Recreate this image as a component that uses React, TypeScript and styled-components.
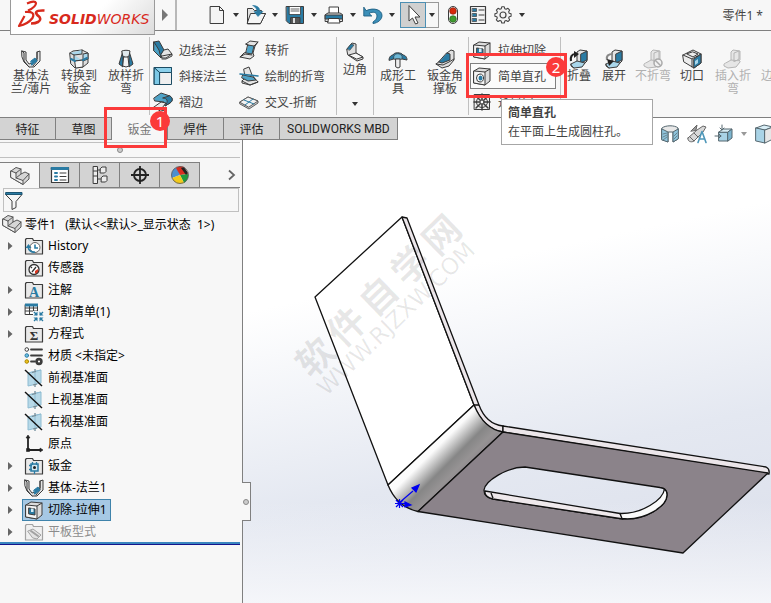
import React from "react";
import styled, { createGlobalStyle, css } from "styled-components";

const font = `"Noto Sans", "Noto Sans CJK SC", sans-serif`;
const c = {
  panel: "#f7f7f7",
  line: "#808080",
  soft: "#c0c0c0",
  tab: "#d3d3d3",
  text: "#444444",
  red: "#fb3a3a",
  ink: "#3c3c3c",
  blue: "#2a7ba3",
  sky: "#a9d6ea",
};

const GlobalStyle = createGlobalStyle`
  *, *::before, *::after { box-sizing: border-box; }
  body { margin: 0; font-family: ${font}; font-size: 12px; color: ${c.text}; }
  button, input { font: inherit; color: inherit; }
  button { padding: 0; border: 0; background: none; cursor: pointer; }
  svg { display: block; flex: none; }
`;

/* ---------- icons ---------- */

const k = { stroke: c.ink, strokeWidth: 1, strokeLinejoin: "round" as const, strokeLinecap: "round" as const };

const part = (
  <g {...k} stroke="#555" fill="#d6d6d6">
    <path d="M1 5l5-3.500 5 1.500v5l4-2 4 2v5l-6 5.500-12-7z" />
    <path fill="#efefef" d="M1 5l5 2v5l7 2.500v4l-12-7z" />
    <path d="M6 7l5-4M6 12l5-4M13 14.500l6-6.500" fill="none" />
  </g>
);
const folder = <path {...k} strokeWidth="1.200" fill="#e9e9e9" d="M1.500 18V3.500l1-1h6l1 2h9V18z" />;
const bent = (
  <>
    <path {...k} fill="#e4e4e4" d="M8 12V3l3-2 7 1v10l-4 4-5-1z" />
    <path {...k} fill={c.blue} d="M12 5l6-3v9l-6 3z" />
    <path {...k} fill={c.sky} d="M2 15l6-3 8 2-3 4-8 1z" />
    <path {...k} fill="none" d="M2 15v2l3 2" />
  </>
);
const plane = (
  <g>
    <path d="M4 5l13-3v13L4 18z" fill="#b7d9e8" stroke="#8ebcd2" />
    <path d="M11 1v18M4 5l13-3" stroke="#8ebcd2" fill="none" />
    <path d="M11 1v3M11 16v3M8 4.500l4-1M9 17l4-1" stroke="#7a8a92" fill="none" />
    <path d="M1 2l17 16" stroke="#111" strokeWidth="1.400" />
  </g>
);
const ghost = (
  <g stroke="#b5b5b5" fill="#e6e6e6" strokeLinejoin="round">
    <path d="M8 11V3l2-2 7 1v9l-5 3z" />
    <path d="M11 4l5-2v8l-5 3zM1 15l7-4 9 1-4 5-8 1z" />
    <path d="M1 15v2l4 2 8-1 4-5v-1" />
  </g>
);
const flange = (
  <g {...k}>
    <path fill="#e4e4e4" d="M1 2l4 1v8l3 4 4-1 4-4V3l3-1v10l-6 6H8l-5-5-2-5z" />
    <path fill="none" d="M1 2l2 2v8l5 6M16 3v9l-4 5" />
    <path fill={c.blue} stroke={c.blue} d="M10 12l4-3 2 3-5 4z" />
  </g>
);
const cube = (
  <g {...k}>
    <path fill="#dcdcdc" d="M2 5l5-3 11 1v12l-5 4-11-2z" />
    <path fill="#f4f4f4" d="M2 5l11 1v13l-11-2z" />
    <path fill="none" d="M13 6l5-3" />
  </g>
);

const ICONS: Record<string, React.ReactNode> = {
  new: <path {...k} fill="#f4f4f4" d="M3.500 1.500h9l4 4v13h-13zM12.500 1.500v4h4" />,
  open: (
    <g {...k}>
      <path fill="#e2e2e2" d="M1.500 18.500V3.500h5l2 2h7v3h4l-5 10z" />
      <path fill="#f5f5f5" d="M5 8.500h14.500l-5 10h-13z" />
      <path fill={c.blue} stroke={c.blue} strokeWidth=".6" d="M7 .5c5 0 7 3 7 6h3l-5 5-4-5h3c0-2-1-4-4-6z" />
    </g>
  ),
  save: (
    <g {...k}>
      <path fill={c.blue} d="M1.500 1.500h17v17H4l-2.500-2.500z" />
      <path fill="#fff" strokeWidth=".8" d="M4.500 1.500h11v8h-11z" />
      <path d="M6 4h8M6 6h8" strokeWidth=".8" />
      <path fill="#555" d="M6 12.500h9v6H6z" />
      <path fill="#ddd" stroke="none" d="M8 13h2v5H8z" />
    </g>
  ),
  print: (
    <g {...k}>
      <path fill="#fff" d="M5.500 2h9v7h-9z" />
      <path fill="#e2e2e2" d="M1.500 9.500L4 8h12l2.500 1.500v7h-17z" />
      <path fill={c.blue} d="M1.500 10h17v4h-17z" />
      <path fill="#fff" d="M5 13.500h10l1 4.500H4z" />
    </g>
  ),
  undo: <path {...k} stroke="#1d5f82" strokeWidth=".9" fill="#3c8fb8" d="M.8 2.500v8.500h8L6 8.500c4-2.500 8-1 8 2.500 0 3-2 4.500-4 6v1.500c5-.5 9-4 9-8 0-5.500-8-8.500-15.500-5z" />,
  cursor: <path {...k} fill="#fff" d="M6 1v15l3.500-3 3 6 2.500-1-3-6h4.500z" />,
  traffic: (
    <g>
      <rect x="5.500" y="1.500" width="9" height="17" rx="4.500" fill="#f3f3f3" stroke={c.ink} />
      <circle cx="10" cy="6" r="3.300" fill="#d8290b" stroke="#7d1a08" strokeWidth=".6" />
      <circle cx="10" cy="14" r="3.300" fill="#3f9c2f" stroke="#1d5a15" strokeWidth=".6" />
    </g>
  ),
  list: (
    <g {...k}>
      <path fill="#f2f2f2" strokeWidth="1.200" d="M2.500 1.500h15v17h-15z" />
      <path fill={c.blue} strokeWidth=".7" d="M4.500 3.500h4v3h-4zM4.500 8.500h4v3h-4zM4.500 13.500h4v3h-4z" />
      <path fill="none" d="M11 5h5M11 10h5M11 15h5" />
    </g>
  ),
  gear: (
    <g fill="#f3f3f3" stroke="#444" strokeWidth="1.200" strokeLinejoin="round">
      <path d="M8.600 2h2.800l.6 2.200 1.500.6 2-1.100 1.900 1.900-1.100 2 .6 1.500 2.100.6v2.700l-2.100.6-.6 1.500 1.100 2-1.900 1.900-2-1.100-1.500.6-.6 2.100H8.600L8 17.900l-1.500-.6-2 1.100-1.900-1.900 1.100-2-.6-1.500L1 12.400V9.700l2.100-.6.6-1.500-1.100-2 1.900-1.900 2 1.100L8 4.200z" transform="translate(1 0) scale(.9)" />
      <circle cx="10" cy="10" r="3" />
    </g>
  ),
  flange,
  convert: (
    <g {...k}>
      <path fill="#dedede" d="M1 4l3-2 9-1 6 3v10l-5 4-8 1-4-4z" />
      <path fill={c.sky} d="M1 4l4 2 8-1V1M5 6v6l9-1V5l5-1v6l-5 2" />
      <path fill="#f6f6f6" d="M6 12l8-1v7l-7 1z" />
      <path stroke={c.blue} fill="none" strokeWidth="2" d="M2 10l4 2M14 11l4-2" />
    </g>
  ),
  loft: (
    <g {...k}>
      <path fill={c.blue} d="M7 2L3 15l4 3V8zM13 2l4 13-4 3V8z" />
      <path fill="#dfe8ec" d="M6 2c2-1 6-1 8 0l-1 5-3 2-3-2z" />
      <path fill="#f3f3f3" d="M8 8h4l1 9-3 1-3-1z" />
    </g>
  ),
  edge: (
    <g {...k}>
      <path fill={c.blue} d="M1 2l5-1 5 9v7l-3 1-7-7z" />
      <path fill="#4aa0c5" d="M1 2l5 8 2 8-7-7z" />
      <path fill="#e4e4e4" d="M11 10l4-1 4 5-6 4-4 0-1-3z" />
      <path fill="none" d="M9 16l10-2v2l-6 3H9" />
    </g>
  ),
  miter: (
    <g {...k} stroke="#1c4c63">
      <path fill="#2f86ae" d="M1.500 1.500h17v5H7v12H1.500z" />
      <path fill="#7cc8e6" d="M1.500 1.500L7 6.500v12H1.500z" />
      <path fill="#8bd0eb" d="M1.500 1.500h17v5H7z" />
      <path fill="#efefef" d="M7 6.500h11.500v12H7z" />
    </g>
  ),
  hem: (
    <g {...k}>
      <path fill="#4fa3c7" d="M1 6l7-5 9 3c3 2 3 5 0 7l-5 3-1-4-9-1z" />
      <path fill={c.blue} d="M10 6c4 0 6 3 2 8l5-3c3-2 3-5 0-7z" />
      <path fill="#e9e9e9" d="M1 15l7-5 5 1-4 5 3 2-4 1z" />
    </g>
  ),
  jog: (
    <g {...k}>
      <path fill="#e4e4e4" d="M7 4l4-3 8 1-3 4-2 7 1 3-4 3-10-2 4-4 3-1 2-6z" />
      <path fill="#4fa3c7" d="M9 5l6 1-2 8-6-1z" />
      <path fill="none" d="M1 17l5-3 7 1M7 4l2 1M15 6l4-4" />
    </g>
  ),
  sketched: (
    <g {...k}>
      <path fill="#e4e4e4" d="M5 3l5-2 3 8 6 7-8 3-8-4 3-3z" />
      <path fill="#4fa3c7" d="M4 9l10 2 3 3-8 1-6-3z" />
      <path stroke={c.blue} strokeWidth="1.600" d="M1 8l18 2" />
      <path fill="none" d="M3 15v2l8 2 8-3" />
    </g>
  ),
  cross: (
    <g {...k} stroke="#5a5a5a">
      <path fill="#d4d4d4" d="M1 10l8-5 10 4v2l-9 6-9-5z" />
      <path fill="#f2f2f2" d="M1 10l8-5 10 4-9 6z" />
      <path stroke={c.blue} d="M5 8l10 4M14 7l-8 6" />
    </g>
  ),
  corner: (
    <g {...k}>
      <path fill="#dedede" d="M2 7l5-6 4 1v9l7 4v2l-6 2-9-6z" />
      <path fill="#f7f7f7" d="M4 13l7-2 7 4-6 2z" />
      <path fill={c.blue} strokeWidth=".6" d="M2 7l4-5 3 1-4 5z" />
    </g>
  ),
  form: (
    <g {...k}>
      <path fill={c.blue} d="M1 11c0-4 3-5 4-5 1-3 8-3 10 0 1 0 4 1 4 5l-5-1H6z" />
      <path fill="#6eb8d6" strokeWidth=".6" d="M6 7c1-3 6-3 8 0v3H6z" />
      <path fill="#eee" d="M8 10h4v8l-2 1-2-1z" />
    </g>
  ),
  gusset: (
    <g {...k}>
      <path fill="#e0e0e0" d="M12 4l4-3 3 1v9l-5 6-7 2-6-4 4-3 7-1z" />
      <path fill={c.blue} d="M12 4l3 1v6l-8 3-3-1z" />
      <path fill="none" d="M1 15l7 1 6-3 5-3" />
    </g>
  ),
  cut: (
    <g>
      {cube}
      <path {...k} fill={c.blue} d="M5 8l6 1v6l-6-1z" />
      <path fill="#d6ebf4" d="M7 8.500h2.500v3.500H7z" />
    </g>
  ),
  hole: (
    <g>
      {cube}
      <ellipse {...k} fill="#fff" cx="8" cy="12" rx="3.500" ry="4" />
      <ellipse fill={c.blue} cx="8.500" cy="12" rx="2" ry="2.600" />
    </g>
  ),
  vent: (
    <g {...k} fill="none">
      <path fill="#eee" d="M2.500 2.500h15v15h-15z" />
      <path d="M10 2v16M2 10h16M4 4l12 12M16 4L4 16" strokeWidth="1.500" />
      <circle cx="10" cy="10" r="5.500" />
      <circle cx="10" cy="10" r="2" fill="#fff" />
    </g>
  ),
  fold: (
    <g>
      {bent}
      <path d="M2 12C1 8 3 5 6 5" stroke="#222" strokeWidth="2.200" fill="none" />
      <path d="M5 2l5 3-5 4z" fill="#222" />
    </g>
  ),
  unfold: (
    <g>
      {bent}
      <path d="M9 5C4 5 2 7 3 11" stroke="#888" strokeWidth="2.200" fill="none" />
      <path d="M3 10l7 2-5 5z" fill="#222" />
    </g>
  ),
  nobend: (
    <g>
      {ghost}
      <circle cx="15" cy="14" r="4" fill="#f2f2f2" stroke="#aaa" strokeWidth="1.500" />
      <path d="M12 11l6 6" stroke="#aaa" strokeWidth="1.500" />
    </g>
  ),
  rip: (
    <g {...k}>
      <path fill="#ececec" d="M1 6l10-5 8 4v9l-7 5-10-6z" />
      <path fill="none" d="M1 6l9 4 9-5M5 5l6 3 5-3-5-2zM10 10v8" />
      <path fill={c.blue} d="M12 10l7-5v9l-7 5z" />
      <path fill={c.sky} stroke="none" d="M13 12l3-2v4l-3 2z" />
    </g>
  ),
  ghost,
  trim: <path stroke="#b5b5b5" fill="#eee" d="M4 5h12v6H4z" />,
  section: (
    <g {...k} stroke="#55676f">
      <path fill="#e8e8e8" d="M2 4c3-3 13-3 16 0v11l-5 3V8H8v10l-6-3z" />
      <path fill="#8fc4dc" d="M2 5l6 3v10l-6-2zM18 5l-5 3v10l5-3z" />
      <path strokeWidth=".7" d="M3 10l4-1M3 13l4-2M3 16l4-3M14 12l3-3M14 15l3-3" />
    </g>
  ),
  view: (
    <g {...k} stroke="#666">
      <path fill="#d8d8d8" d="M1 14l9-8 6-4 3 1-3 5-9 9c-3 2-7 0-6-3z" />
      <path fill="#999" d="M9 6l1-5-6 6z" />
      <path d="M3 13l4 4M7 9l4 4" fill="none" />
      <path d="M11 18.500l4-11 4 11M12.500 15h5" stroke="#4d96b8" strokeWidth="1.600" fill="none" />
    </g>
  ),
  orient: (
    <g {...k} stroke="#55676f">
      <path fill="#a9d3e6" d="M5 8h9v9H5z" />
      <path fill="#d9eef6" d="M5 8l4-3h9l-4 3z" />
      <path fill="#7db5cf" d="M14 8l4-3v9l-4 3z" />
      <path d="M8 1v5M6 4l2 2 2-2M1 12h6M5 10l2 2-2 2" fill="none" />
    </g>
  ),
  display: (
    <g {...k} stroke="#55676f">
      <path fill="#d9eef6" d="M2 4l8-3 9 2-8 3z" />
      <path fill="#a9d3e6" d="M2 4l9 2v13l-9-2z" />
      <path fill="#e6e6e6" d="M11 6l8-3v12l-8 4z" />
    </g>
  ),
  part,
  property: (
    <g {...k}>
      <path fill="#fff" strokeWidth="1.200" d="M1.500 2.500h17v15h-17z" />
      <path fill={c.blue} stroke={c.blue} d="M1.500 2.500h17v2h-17z" />
      <path stroke={c.blue} strokeWidth="2" d="M5 8h2M5 11.500h2M5 15h2" />
      <path d="M10 8h6M10 11.500h6M10 15h6" />
    </g>
  ),
  config: (
    <g {...k} fill="#ededed">
      <path d="M3.500 1.500h4v17h-4zM3.500 6h4M3.500 11h4" />
      <path d="M7.500 5h3M7.500 14h3" />
      <path d="M10.500 3.500l1.500-1.500h4v4.500l-1.500 1.500h-4zM11.500 12.500l1.500-1.500h4v4.500l-1.500 1.500h-4z" />
    </g>
  ),
  target: (
    <g fill="none" stroke="#222" strokeWidth="1.800">
      <circle cx="10" cy="10" r="6" />
      <path d="M10 1v18M1 10h18" />
    </g>
  ),
  ball: (
    <g>
      <circle cx="10" cy="10" r="8.500" fill="#eee" />
      <path d="M10 10L2 13A8.500 8.500 0 0 1 4 4l3-2z" fill="#4b8fd0" />
      <path d="M10 10L6 3c2-2 6-2 8-1l4 7z" fill="#d92d20" />
      <path d="M10 10l8-1c1 4-1 7-4 9z" fill="#1f9a3d" />
      <path d="M10 10l4 8c-5 2-10 0-12-5z" fill="#f2c91c" />
      <path d="M11 3l3-1 4 6-2 2z" fill="#222" />
      <circle cx="10" cy="10" r="8.500" fill="none" stroke="#555" strokeWidth=".8" />
    </g>
  ),
  funnel: (
    <g {...k}>
      <path fill="#f5f5f5" d="M2 4.500h16l-6 7v6l-4 2v-8z" />
      <path fill={c.blue} stroke="#1c5572" d="M2 2.500h16v2H2z" />
    </g>
  ),
  history: (
    <g>
      {folder}
      <circle cx="11" cy="11.500" r="5" fill="#fff" stroke="#666" />
      <path d="M11 8.500v3.500h3M4 11a6 6 0 0 0 7 5" fill="none" stroke={c.blue} strokeWidth="1.600" />
      <path d="M1.500 12l3-4 3 4z" fill={c.blue} />
    </g>
  ),
  sensor: (
    <g>
      {folder}
      <circle cx="10" cy="11.500" r="5" fill="#fff" stroke="#333" strokeWidth="1.300" />
      <path d="M8 14l4-5M7 9l1 1" stroke="#333" strokeWidth="1.300" />
      <path d="M11 13l3-2c1 3-1 4-3 5z" fill="#d9351f" />
    </g>
  ),
  note: (
    <g>
      {folder}
      <text x="10" y="17" textAnchor="middle" fontFamily="Liberation Serif, serif" fontWeight="700" fontSize="14" fill={c.blue}>A</text>
    </g>
  ),
  equation: (
    <g>
      {folder}
      <text x="10" y="16" textAnchor="middle" fontFamily="Liberation Serif, serif" fontWeight="700" fontSize="13" fill="#333">Σ</text>
    </g>
  ),
  cutlist: (
    <g>
      <path {...k} fill="#fff" d="M1.500 2.500h12v10h-12zM1.500 6h12M1.500 9h12M5.500 3v9M9.500 3v9" />
      <path fill={c.blue} d="M1 1.500h13v3H1z" />
      <path fill="#f7f7f7" d="M9 9h11v11H9z" />
      <path fill={c.blue} d="M13.500 9.500v4h-4zM15.500 9.500v4h4zM13.500 19.500v-4h-4zM15.500 19.500v-4h4z" />
      <path d="M10 10l3 3M19 10l-3 3M10 19l3-3M19 19l-3-3" stroke={c.blue} strokeWidth="1.400" />
    </g>
  ),
  material: (
    <g {...k}>
      <circle cx="2.800" cy="3.500" r="1.800" fill="#fff" />
      <circle cx="2.800" cy="9.500" r="1.800" fill="#6cc0e5" stroke={c.blue} />
      <circle cx="2.800" cy="15.500" r="1.800" fill="#f0c31d" stroke="#a88600" />
      <path d="M7 3.500h11M7 9.500h11M7 15.500h4" strokeWidth="1.800" />
      <circle cx="15" cy="15.500" r="2.400" fill="#fff" strokeWidth="2.600" />
    </g>
  ),
  plane,
  origin: (
    <g fill="#222" stroke="#222">
      <path d="M4 3v13h13" fill="none" strokeWidth="1.800" />
      <path d="M4 1l2 3H2zM19 16l-3-2v4zM2.500 14.500h3v3h-3z" strokeWidth=".6" />
    </g>
  ),
  sheet: (
    <g>
      {folder}
      <path d="M7 8h7v7H7z" fill="#d2e8f2" stroke={c.blue} strokeWidth="1.500" />
      <path d="M8.500 6v3M12.500 6v3M10.500 15v3M5 9.500h3M5 13.500h3" stroke={c.blue} strokeWidth="1.300" />
      <circle cx="10.500" cy="11.500" r="1.500" fill="#222" />
    </g>
  ),
  flat: (
    <g opacity=".45">
      {folder}
      <path {...k} fill="#ccc" d="M4 9l5-2 8 6-4 4-4-1z" />
      <path {...k} fill="none" d="M7 9l7 5" strokeWidth="2" />
    </g>
  ),
};

const Icon = ({ name }: { name: string }) => (
  <svg width="20" height="20" viewBox="0 0 20 20" aria-hidden="true">
    {ICONS[name]}
  </svg>
);

const Down = styled.span<{ $pale?: boolean }>`
  border: 3px solid transparent;
  border-top: 4px solid ${(p) => (p.$pale ? "#999" : "#333")};
  border-bottom: 0;
`;

/* ---------- page frame ---------- */

const Page = styled.div`
  min-height: 100vh;
  display: flex;
  flex-direction: column;
  background: #fff;
  overflow-x: clip;
`;

const TitleBar = styled.header`
  height: 31px;
  display: flex;
  align-items: center;
  background: ${c.panel};
  border-bottom: 1px solid ${c.line};
`;

const Brand = styled.div`
  position: relative;
  z-index: 1;
  align-self: flex-start;
  display: flex;
  gap: 3px;
  width: 145px;
  height: 35px;
  margin-left: 10px;
  padding: 0 4px 0 5px;
  border: 1px solid #9a9a9a;
  border-top: 0;
  background: linear-gradient(135deg, #fff 55%, #dcdcdc);
  color: #d8291c;
  font: italic 14px/39px "DejaVu Sans", sans-serif;
`;

const Heavy = styled.b`
  font-weight: 700;
`;

const Flyout = styled.button`
  align-self: stretch;
  width: 22px;
  display: grid;
  place-items: center;
  border-right: 2px solid #b8b8b8;
`;

const QuickBar = styled.div`
  display: flex;
  align-items: center;
  gap: 2px;
  margin-left: 30px;
`;

const Quick = styled.button`
  display: flex;
  align-items: center;
`;

const QuickCaret = styled.span`
  width: 17px;
  display: grid;
  place-items: center;
`;

const SelectTool = styled.div`
  display: flex;
  height: 26px;
  width: 39px;
`;

const SelectMain = styled.button`
  width: 26px;
  display: grid;
  place-items: center;
  border: 1px solid #4d8fb3;
  background: #d0d0d0;
`;

const SelectMore = styled.button`
  width: 13px;
  display: grid;
  place-items: center;
  border: 1px solid #999;
  border-left: 0;
`;

const Extras = styled.div`
  display: flex;
  align-items: center;
  gap: 5px;
  margin-left: 4px;
`;

const DocName = styled.h1`
  margin: 0 8px 0 auto;
  font-size: 12px;
  font-weight: 400;
`;

/* ---------- ribbon ---------- */

const Ribbon = styled.div`
  display: flex;
  height: 86px;
  padding: 6px 0 2px;
  background: ${c.panel};
  overflow-x: clip;
`;

const Group = styled.div<{ $lead?: number }>`
  flex: none;
  display: flex;
  padding-left: ${(p) => p.$lead ?? 0}px;
  border-right: 1px solid ${c.soft};
  &:last-child {
    border-right: 0;
  }
`;

const Tall = styled.button<{ $w: number; $raised?: boolean }>`
  flex: none;
  display: flex;
  flex-direction: column;
  align-items: center;
  width: ${(p) => p.$w}px;
  padding-top: ${(p) => (p.$raised ? 5 : 12)}px;
  line-height: 13px;
  text-align: center;
  &:disabled {
    color: #b0b0b0;
  }
`;

const TallLabel = styled.span<{ $raised?: boolean }>`
  max-width: 44px;
  padding-top: ${(p) => (p.$raised ? 1 : 0)}px;
  margin-bottom: ${(p) => (p.$raised ? 26 : 0)}px;
`;

const SmallGrid = styled.div<{ $cols: string }>`
  display: grid;
  grid-template-columns: ${(p) => p.$cols};
  grid-auto-rows: 26px;
`;

const Small = styled.button<{ $hot?: boolean }>`
  display: flex;
  align-items: center;
  gap: 6px;
  white-space: nowrap;
  ${(p) =>
    p.$hot &&
    css`
      width: 86px;
      height: 26px;
      margin-left: -2px;
      padding-left: 1px;
      border: 1px solid ${c.line};
      background: #fbfbfb;
    `}
`;

const Anchor = styled.div`
  position: relative;
  display: flex;
`;

const Mark = styled.span<{ $w: number; $h: number; $x: number }>`
  position: absolute;
  z-index: 3;
  left: ${(p) => p.$x}px;
  top: -10px;
  width: ${(p) => p.$w}px;
  height: ${(p) => p.$h}px;
  border: 3px solid ${c.red};
  pointer-events: none;
`;

const Badge = styled.span<{ $x: number }>`
  position: absolute;
  z-index: 4;
  left: ${(p) => p.$x}px;
  top: -6px;
  width: 20px;
  height: 20px;
  border-radius: 50%;
  background: ${c.red};
  color: #fff;
  font-size: 15px;
  line-height: 20px;
  text-align: center;
  pointer-events: none;
`;

const Tip = styled.div`
  position: absolute;
  z-index: 2;
  left: 29px;
  top: 36px;
  width: 152px;
  padding: 3px 6px;
  border: 1px solid #a6a6a6;
  background: #fff;
  line-height: 19px;
  white-space: nowrap;
`;

const TipTitle = styled.strong`
  display: block;
`;

/* ---------- command tabs ---------- */

const TabRow = styled.div`
  display: flex;
  height: 23px;
  background: #fff;
`;

const tabLook = css<{ $on?: boolean }>`
  height: 23px;
  border: solid ${c.line};
  border-width: ${(p) => (p.$on ? "0 1px 0 0" : "1px 1px 1px 0")};
  background: ${(p) => (p.$on ? c.panel : c.tab)};
  color: ${(p) => (p.$on ? "#777" : "#222")};
`;

const CommandTab = styled.button<{ $on?: boolean }>`
  min-width: 56px;
  padding: 0 7px;
  white-space: nowrap;
  font-family: Roboto, "Noto Sans CJK SC", sans-serif;
  ${tabLook}
`;

const Hud = styled.div`
  position: relative;
  z-index: 1;
  flex: 1;
  min-width: 0;
  display: flex;
  align-items: center;
  justify-content: flex-end;
  gap: 7px;
  height: 29px;
  padding-top: 3px;
  border-top: 1px solid ${c.line};
  clip-path: inset(0);
`;

const HudButton = styled.button`
  display: flex;
  align-items: center;
  &:last-child {
    margin-right: -3px;
  }
`;

/* ---------- feature panel ---------- */

const Work = styled.div`
  flex: 1;
  display: grid;
  grid-template-columns: 243px 1fr;
`;

const Panel = styled.aside`
  position: relative;
  display: flex;
  flex-direction: column;
  background: ${c.panel};
  border-right: 1px solid ${c.line};
  padding-right: 2px;
`;

const Grip = styled.div`
  height: 16px;
  margin: 2px 0 4px;
  display: grid;
  place-items: center;
  border: solid ${c.soft};
  border-width: 1px 0;
`;

const Dot = styled.span`
  width: 6px;
  height: 6px;
  border: 1px solid #888;
  border-radius: 50%;
  background: #ccc;
`;

const PanelTabs = styled.div`
  display: flex;
  height: 26px;
`;

const PanelTab = styled.button<{ $on?: boolean }>`
  width: 40px;
  display: grid;
  place-items: center;
  border: solid ${c.line};
  border-width: ${(p) => (p.$on ? "1px 1px 0 0" : "1px 1px 1px 0")};
  background: ${(p) => (p.$on ? c.panel : c.tab)};
`;

const MoreTabs = styled.button`
  flex: 1;
  display: flex;
  align-items: center;
  justify-content: flex-end;
  padding-right: 4px;
  border-bottom: 1px solid ${c.line};
`;

const Filter = styled.label`
  display: flex;
  align-items: center;
  height: 24px;
  margin: 0 1px 0 3px;
  border: 1px solid ${c.soft};
`;

const FilterInput = styled.input`
  flex: 1;
  min-width: 0;
  border: 0;
  outline: 0;
  background: transparent;
`;

const Tree = styled.ul`
  margin: 0;
  padding: 0;
  list-style: none;
  color: #000;
  line-height: 22px;
`;

const Root = styled.div`
  display: flex;
  align-items: center;
  gap: 3px;
  height: 23px;
  padding-left: 2px;
  color: #000;
  white-space: pre;
`;

const Row = styled.li`
  display: flex;
  align-items: center;
  height: 22px;
`;

const Twist = styled.button`
  width: 22px;
  height: 22px;
  padding-left: 8px;
  flex: none;
  display: flex;
  align-items: center;
`;

const Node = styled.button<{ $on?: boolean; $dim?: boolean }>`
  display: flex;
  align-items: center;
  gap: 4px;
  height: 22px;
  padding: 0 3px 0 1px;
  border: 1px solid ${(p) => (p.$on ? "#3f83ab" : "transparent")};
  background: ${(p) => (p.$on ? "#a6c8e4" : "transparent")};
  color: ${(p) => (p.$dim ? "#8c8c8c" : "#000")};
  white-space: nowrap;
`;

const Rollback = styled.div`
  height: 3px;
  margin-top: -1px;
  background: #3a86bf;
  border-bottom: 1px solid #14148c;
`;

const Handle = styled.button`
  position: absolute;
  z-index: 1;
  top: 342px;
  left: 100%;
  width: 9px;
  height: 39px;
  display: grid;
  place-items: center;
  border: solid ${c.line};
  border-width: 1px 1px 1px 0;
  background: ${c.panel};
`;

const Canvas = styled.main`
  min-width: 0;
  background:
    linear-gradient(180deg, rgba(247, 248, 251, 0) 78%, rgba(247, 248, 251, 0.9) 100%),
    linear-gradient(168deg, #fff 30%, #e4e8f1 66%, #dadeea 100%);
`;

const Scene = styled.svg`
  width: 100%;
  height: auto;
`;

/* ---------- data ---------- */

const quick = [
  ["new", "新建"],
  ["open", "打开"],
  ["save", "保存"],
  ["print", "打印"],
  ["undo", "撤销"],
];

const flanges = [
  ["edge", "边线法兰"],
  ["jog", "转折"],
  ["miter", "斜接法兰"],
  ["sketched", "绘制的折弯"],
  ["hem", "褶边"],
  ["cross", "交叉-折断"],
];

const bends: [string, string, number, boolean][] = [
  ["fold", "折叠", 36, false],
  ["unfold", "展开", 34, false],
  ["nobend", "不折弯", 44, true],
  ["rip", "切口", 34, false],
  ["ghost", "插入折弯", 48, true],
  ["trim", "边角剪裁", 44, true],
];

const tabs = ["特征", "草图", "钣金", "焊件", "评估", "SOLIDWORKS MBD"];

const panelTabs = [
  ["part", "特征树"],
  ["property", "属性"],
  ["config", "配置"],
  ["target", "尺寸"],
  ["ball", "外观"],
];

const nodes: { icon: string; name: string; open?: boolean; on?: boolean; dim?: boolean }[] = [
  { icon: "history", name: "History", open: true },
  { icon: "sensor", name: "传感器" },
  { icon: "note", name: "注解", open: true },
  { icon: "cutlist", name: "切割清单(1)", open: true },
  { icon: "equation", name: "方程式", open: true },
  { icon: "material", name: "材质 <未指定>" },
  { icon: "plane", name: "前视基准面" },
  { icon: "plane", name: "上视基准面" },
  { icon: "plane", name: "右视基准面" },
  { icon: "origin", name: "原点" },
  { icon: "sheet", name: "钣金", open: true },
  { icon: "flange", name: "基体-法兰1", open: true },
  { icon: "cut", name: "切除-拉伸1", open: true, on: true },
  { icon: "flat", name: "平板型式", open: true, dim: true },
];

const TallButton = ({ icon, label, w, off }: { icon: string; label: string; w: number; off?: boolean }) => (
  <Tall $w={w} disabled={off}>
    <Icon name={icon} />
    <TallLabel>{label}</TallLabel>
  </Tall>
);

const Model = () => (
  <Scene viewBox="243 140 528 463" role="img" aria-label="钣金零件">
    <defs>
      <linearGradient id="bend" gradientUnits="userSpaceOnUse" x1="424" y1="438" x2="464" y2="478">
        <stop offset="0" stopColor="#fff" />
        <stop offset=".28" stopColor="#fbfbfb" />
        <stop offset=".62" stopColor="#868686" />
        <stop offset=".8" stopColor="#969394" />
        <stop offset="1" stopColor="#8b838a" />
      </linearGradient>
    </defs>
    <g stroke="#111" strokeWidth="1.300" strokeLinejoin="round">
      <path fill="#fff" d="M402 217L315 297L388 485L474 405z" />
      <path fill="#ece6ea" d="M402 217L407 218L479 405Q486 424 503 426L503 432Q483 429 474 405z" />
      <path fill="url(#bend)" d="M388 485L474 405Q484 429 503 432L418 511.500Q397 507 388 485z" />
      <path fill="none" d="M474 405H479M503 426Q505 430 502 432" />
      <path fill="#ece6ea" d="M503 426L766 467Q770 469 769 474L503 432z" />
      <path
        fill="#8b838a"
        fillRule="evenodd"
        d="M503 432L768 473L683 553L418 511.500z
           M525 467C507 467 485 481 484 490C484 496 488 498 493 499L620 518.500C645 521 667 506 667 495C667 490 664 488 660 487.500z"
      />
      <path fill="#efe9ec" d="M485 491L620 513.500L623 519L493 499Q484 497 485 491z" />
      <path fill="#fafafa" d="M620 513.500C642 514 663 500 664.500 489C667 491 667 493 667 495C667 506 645 521 622 518.500z" />
      <path fill="none" d="M491 493L493 498" />
    </g>
    <g stroke="#0000f0" fill="#0000f0" strokeWidth="1.200">
      <path d="M399 503L413 491M396 500l7 7M403 500l-7 7M395 503.500h10M399.500 499v9" fill="none" />
      <path d="M419 485l-3 7-4-4zM411 505l-6-3v5z" />
    </g>
    <g fill="#000" fillOpacity=".09" transform="rotate(-44 313 357)">
      <text x="296 340 384 428 472" y="372" fontSize="37" fontWeight="700" fontFamily="Noto Sans CJK SC, sans-serif">
        软件自学网
      </text>
      <text x="295" y="395" fontSize="23" fontFamily="DejaVu Sans, sans-serif">
        WWW.RJZXW.COM
      </text>
    </g>
  </Scene>
);

export default function App() {
  return (
    <Page>
      <GlobalStyle />
      <TitleBar>
        <Brand>
          <svg width="30" height="30" viewBox="0 0 30 30" fill="none" stroke="#d8291c" strokeLinejoin="round" aria-hidden="true">
            <path d="M11 3.500Q19 0 20 3Q20 7 12 10.500" strokeWidth="2.200" />
            <path d="M9 12Q20 11 16.500 18Q12 24 3 26L8.500 16" strokeWidth="2.200" />
            <path d="M28.500 10.500Q20 10 20 13Q20.500 14.500 23.500 17Q25.500 20 22 22Q19.500 23.500 15 23.500" strokeWidth="2.600" />
          </svg>
          <span>
            <Heavy>SOLID</Heavy>WORKS
          </span>
        </Brand>
        <Flyout aria-label="菜单">
          <svg width="8" height="14" viewBox="0 0 8 14">
            <path d="M1 1l6 6-6 6z" fill="#777" />
          </svg>
        </Flyout>
        <QuickBar>
          {quick.map(([icon, label]) => (
            <Quick key={icon} aria-label={label}>
              <Icon name={icon} />
              <QuickCaret>
                <Down />
              </QuickCaret>
            </Quick>
          ))}
        </QuickBar>
        <SelectTool>
          <SelectMain aria-label="选择">
            <Icon name="cursor" />
          </SelectMain>
          <SelectMore aria-label="选择选项">
            <Down />
          </SelectMore>
        </SelectTool>
        <Extras>
          <Quick aria-label="重建">
            <Icon name="traffic" />
          </Quick>
          <Quick aria-label="文件属性">
            <Icon name="list" />
          </Quick>
          <Quick aria-label="选项">
            <Icon name="gear" />
            <QuickCaret>
              <Down />
            </QuickCaret>
          </Quick>
        </Extras>
        <DocName>零件1 *</DocName>
      </TitleBar>

      <Ribbon>
        <Group $lead={7}>
          <TallButton icon="flange" label="基体法兰/薄片" w={48} />
          <TallButton icon="convert" label="转换到钣金" w={48} />
          <TallButton icon="loft" label="放样折弯" w={46} />
        </Group>
        <Group $lead={3}>
          <SmallGrid $cols="86px 97px">
            {flanges.map(([icon, label]) => (
              <Small key={icon}>
                <Icon name={icon} />
                {label}
              </Small>
            ))}
          </SmallGrid>
        </Group>
        <Group>
          <Tall $w={36} $raised>
            <Icon name="corner" />
            <TallLabel $raised>边角</TallLabel>
            <Down />
          </Tall>
        </Group>
        <Group>
          <TallButton icon="form" label="成形工具" w={48} />
          <TallButton icon="gusset" label="钣金角撑板" w={46} />
        </Group>
        <Group $lead={3}>
          <SmallGrid $cols="88px">
            <Small>
              <Icon name="cut" />
              拉伸切除
            </Small>
            <Anchor>
              <Small $hot>
                <Icon name="hole" />
                简单直孔
              </Small>
              <Mark $x={-6} $w={101} $h={45} />
              <Badge $x={74}>2</Badge>
              <Tip role="tooltip">
                <TipTitle>简单直孔</TipTitle>
                在平面上生成圆柱孔。
              </Tip>
            </Anchor>
            <Small>
              <Icon name="vent" />
              通风口
            </Small>
          </SmallGrid>
        </Group>
        <Group>
          {bends.map(([icon, label, w, off]) => (
            <TallButton key={icon} icon={icon} label={label} w={w} off={off} />
          ))}
        </Group>
      </Ribbon>

      <TabRow>
        {tabs.map((t) =>
          t === "钣金" ? (
            <Anchor key={t}>
              <CommandTab $on>{t}</CommandTab>
              <Mark $x={-8} $w={63} $h={41} />
              <Badge $x={38}>1</Badge>
            </Anchor>
          ) : (
            <CommandTab key={t}>{t}</CommandTab>
          )
        )}
        <Hud>
          <HudButton aria-label="剖面视图">
            <Icon name="section" />
          </HudButton>
          <HudButton aria-label="视图设定">
            <Icon name="view" />
          </HudButton>
          <HudButton aria-label="视图定向">
            <Icon name="orient" />
          </HudButton>
          <Down $pale />
          <HudButton aria-label="显示样式">
            <Icon name="display" />
          </HudButton>
        </Hud>
      </TabRow>

      <Work>
        <Panel>
          <Grip>
            <Dot />
          </Grip>
          <PanelTabs>
            {panelTabs.map(([icon, label], i) => (
              <PanelTab key={icon} $on={i === 0} aria-label={label}>
                <Icon name={icon} />
              </PanelTab>
            ))}
            <MoreTabs aria-label="更多">
              <svg width="9" height="12" viewBox="0 0 9 12" fill="none" stroke="#666" strokeWidth="1.800">
                <path d="M2 1.500l5 4.500-5 4.500" />
              </svg>
            </MoreTabs>
          </PanelTabs>
          <Filter>
            <Icon name="funnel" />
            <FilterInput aria-label="过滤" />
          </Filter>
          <Root>
            <Icon name="part" />
            {"零件1   (默认<<默认>_显示状态  1>)"}
          </Root>
          <Tree>
            {nodes.map((n) => (
              <Row key={n.name}>
                <Twist as={n.open ? "button" : "span"} aria-label={n.open ? "展开" : undefined}>
                  {n.open && (
                    <svg width="5" height="8" viewBox="0 0 5 8">
                      <path d="M0 0l4.500 4L0 8z" fill="#666" />
                    </svg>
                  )}
                </Twist>
                <Node $on={n.on} $dim={n.dim}>
                  <Icon name={n.icon} />
                  {n.name}
                </Node>
              </Row>
            ))}
          </Tree>
          <Rollback />
          <Handle aria-label="折叠面板">
            <Dot />
          </Handle>
        </Panel>
        <Canvas>
          <Model />
        </Canvas>
      </Work>
    </Page>
  );
}
